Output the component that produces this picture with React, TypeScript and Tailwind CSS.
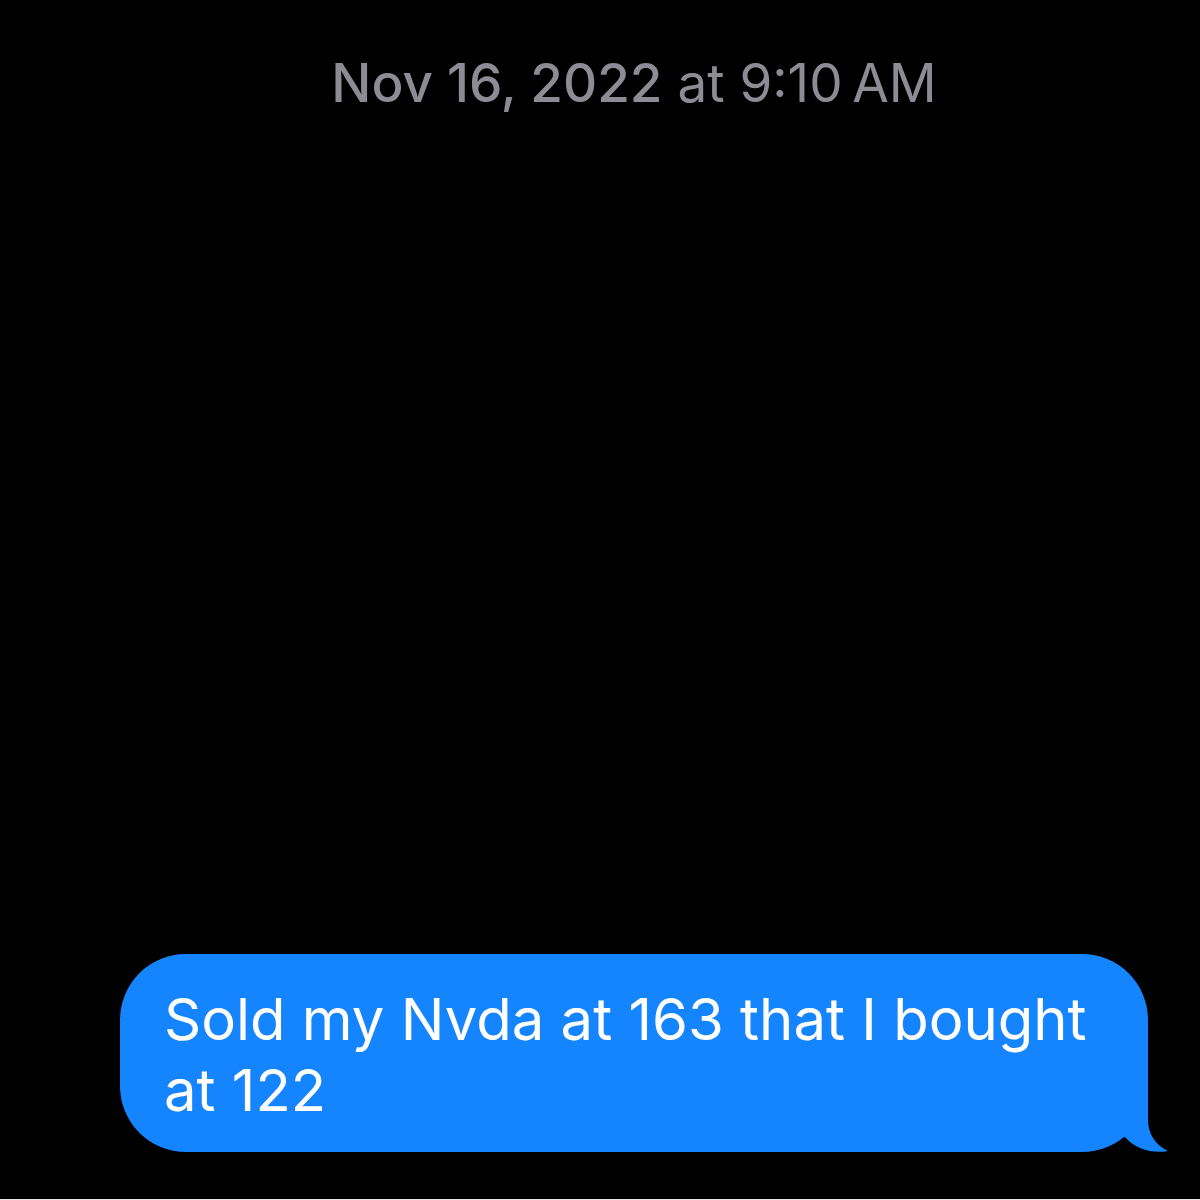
import React from "react";

interface TimestampProps {
  date: string;
  time: string;
}

const Timestamp: React.FC<TimestampProps> = ({ date, time }) => {
  return (
    <div className="text-center text-[53px] leading-[60px] text-[#8d8b93]">
      <span className="font-medium">{date}</span> at {time}
    </div>
  );
};

interface BubbleProps {
  children: React.ReactNode;
}

const Bubble: React.FC<BubbleProps> = ({ children }) => {
  return (
    <div className="relative w-full rounded-[66px] bg-[#1485fe] px-11 pt-[30px] pb-[26px] text-[58px] leading-[71px] text-white">
      <p>{children}</p>
      <svg
        className="absolute -right-5 bottom-0 h-[68px] w-16"
        viewBox="0 0 64 68"
        fill="#1485fe"
        aria-hidden="true"
      >
        <path d="M0 0H44V36C44 49 51 61 64 67C48 70 32 65 22 54L0 40Z" />
      </svg>
    </div>
  );
};

export default function App() {
  return (
    <main className="flex min-h-screen flex-col justify-between border-b border-[#e8e6e6] bg-black pt-[53px] pr-[52px] pb-[47px] pl-[120px] font-['Inter',sans-serif]">
      {/* narrow no-break space before the meridiem */}
      <Timestamp date="Nov 16, 2022" time={"9:10\u202FAM"} />
      <Bubble>Sold my Nvda at 163 that I bought at 122</Bubble>
    </main>
  );
}
